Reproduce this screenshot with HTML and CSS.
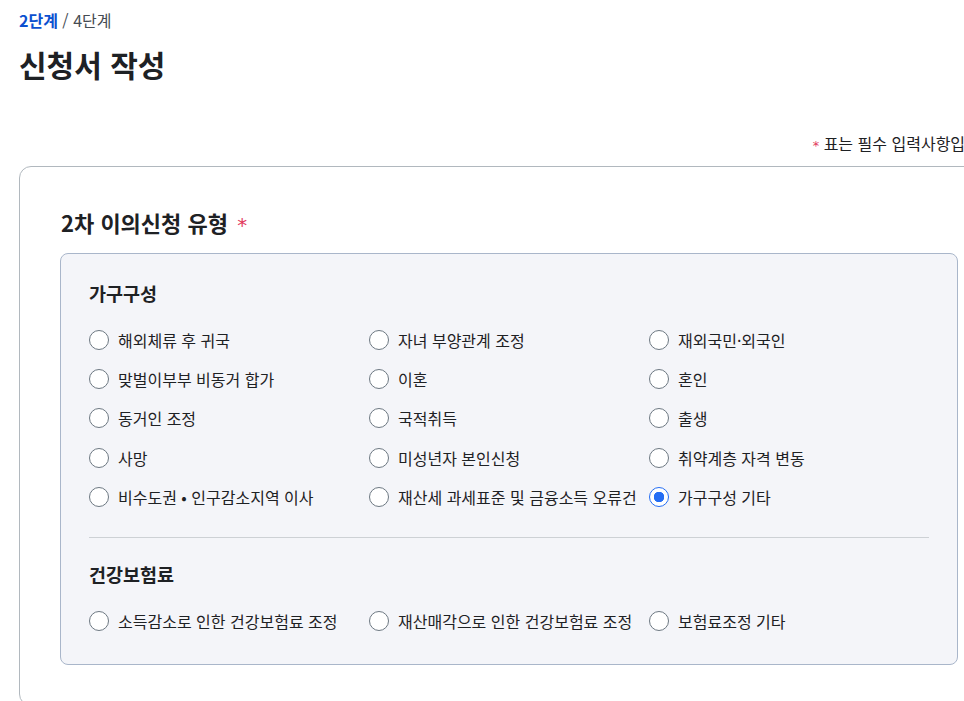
FILE: index.html
```html
<!DOCTYPE html>
<html lang="ko">
<head>
    <meta charset="UTF-8">
    <title>신청서 작성</title>
    <link rel="stylesheet" href="styles.css">
</head>
<body>
<div class="page">
    <p class="step"><strong>2단계</strong> / 4단계</p>
    <h1>신청서 작성</h1>

    <p class="required-note"><span class="star">*</span> 표는 필수 입력사항입니다.</p>

    <section class="card">
        <h2>2차 이의신청 유형 <span class="star">*</span></h2>

        <div class="options">
            <h3>가구구성</h3>
            <div class="radio-grid">
                <label class="radio"><input type="radio" name="type"> 해외체류 후 귀국</label>
                <label class="radio"><input type="radio" name="type"> 자녀 부양관계 조정</label>
                <label class="radio"><input type="radio" name="type"> 재외국민·외국인</label>
                <label class="radio"><input type="radio" name="type"> 맞벌이부부 비동거 합가</label>
                <label class="radio"><input type="radio" name="type"> 이혼</label>
                <label class="radio"><input type="radio" name="type"> 혼인</label>
                <label class="radio"><input type="radio" name="type"> 동거인 조정</label>
                <label class="radio"><input type="radio" name="type"> 국적취득</label>
                <label class="radio"><input type="radio" name="type"> 출생</label>
                <label class="radio"><input type="radio" name="type"> 사망</label>
                <label class="radio"><input type="radio" name="type"> 미성년자 본인신청</label>
                <label class="radio"><input type="radio" name="type"> 취약계층 자격 변동</label>
                <label class="radio"><input type="radio" name="type"> 비수도권 • 인구감소지역 이사</label>
                <label class="radio"><input type="radio" name="type"> 재산세 과세표준 및 금융소득 오류건</label>
                <label class="radio"><input type="radio" name="type" checked> 가구구성 기타</label>
            </div>

            <hr>

            <h3>건강보험료</h3>
            <div class="radio-grid">
                <label class="radio"><input type="radio" name="type"> 소득감소로 인한 건강보험료 조정</label>
                <label class="radio"><input type="radio" name="type"> 재산매각으로 인한 건강보험료 조정</label>
                <label class="radio"><input type="radio" name="type"> 보험료조정 기타</label>
            </div>
        </div>
    </section>
</div>
</body>
</html>
```

FILE: styles.css
```css
html { overflow: hidden; }
body { margin: 0; font-family: "Noto Sans CJK KR", "Noto Sans", sans-serif; color: #1e2124; background: #fff; }
.page { width: 980px; padding: 8px 0 0 19px; }
.step { margin: 0; font-size: 16px; line-height: 24px; color: #464c53; }
.step strong { color: #0b50d0; font-weight: 700; }
h1 { margin: 10px 0 0; font-size: 30px; line-height: 44px; font-weight: 700; }
.required-note { margin: 45px 0 0; text-align: right; font-size: 16px; line-height: 24px; }
.star { color: #e2395c; font-family: "DejaVu Sans", sans-serif; font-weight: 400; font-size: 0.8em; }
h2 .star { font-size: 0.9em; margin-left: 3px; }
.card { margin-top: 8px; border: 1px solid #b1b8be; border-radius: 12px; padding: 38px 40px 40px; }
h2 { margin: 1px 0 11px 1px; font-size: 22px; line-height: 32px; font-weight: 700; }
.options { background: #f4f5f9; border: 1px solid #a9b6ca; border-radius: 8px; padding: 25px 28px 23px; }
h3 { margin: 0 0 13px; font-size: 18.5px; line-height: 28px; font-weight: 700; }
.radio-grid { display: grid; grid-template-columns: repeat(3, 280px); }
.radio { display: flex; align-items: center; gap: 9px; height: 39.3px; font-size: 16px; white-space: nowrap; }
.radio input { appearance: none; margin: 0; width: 20px; height: 20px; border: 1px solid #6d7882; border-radius: 50%; background: #fff; flex: none; }
.radio input:checked { border-color: #256ef4; background: radial-gradient(circle, #256ef4 0 5px, #fff 5.5px); }
hr { border: 0; border-top: 1px solid #cdd1d5; margin: 21px 0 22px; }
```
